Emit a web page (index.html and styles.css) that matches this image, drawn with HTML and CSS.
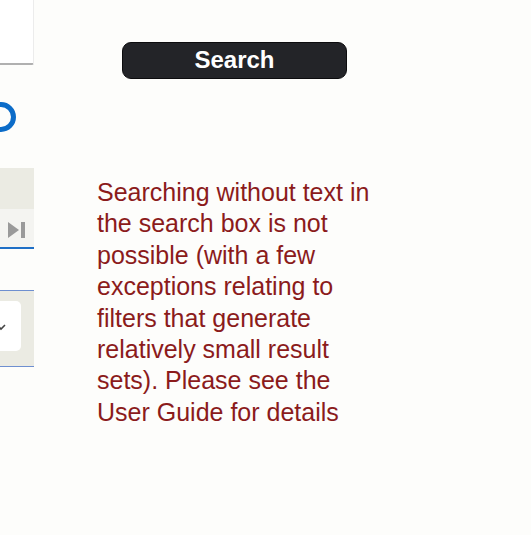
FILE: index.html
```html
<!DOCTYPE html>
<html lang="en">
<head>
<meta charset="utf-8">
<title>Search</title>
<link rel="stylesheet" href="styles.css">
</head>
<body>
<div class="page">
  <aside class="side">
    <div class="input-box"></div>
    <div class="radio-ring"></div>
    <div class="grey-box"></div>
    <div class="pager">
      <svg class="last-icon" width="20" height="20" viewBox="0 0 20 20" aria-hidden="true">
        <path d="M2 2 L13 10 L2 18 Z" fill="#9a9a9a"/>
        <rect x="15" y="2" width="4" height="16" fill="#9a9a9a"/>
      </svg>
    </div>
    <div class="select-wrap">
      <div class="select-inner">
        <svg class="chev" width="8" height="8" viewBox="0 0 8 8" aria-hidden="true">
          <path d="M-3 2 L1 6 L5 2" fill="none" stroke="#444" stroke-width="1.6"/>
        </svg>
      </div>
    </div>
  </aside>
  <main class="main">
    <button class="search-btn" type="button">Search</button>
    <p class="notice">Searching without text in the search box is not possible (with a few exceptions relating to filters that generate relatively small result sets). Please see the User Guide for details</p>
  </main>
</div>
</body>
</html>
```

FILE: styles.css
```css
html, body {
  margin: 0;
  padding: 0;
  background: #fdfdfb;
  font-family: "Liberation Sans", Arial, sans-serif;
}

.page {
  display: flex;
  width: 531px;
  height: 535px;
  overflow: hidden;
}

.side {
  width: 34px;
  flex: 0 0 34px;
  display: flex;
  flex-direction: column;
}

.input-box {
  height: 65px;
  box-sizing: border-box;
  background: #ffffff;
  border-bottom: 2px solid #b0b0b0;
  border-right: 1px solid #ececec;
  border-bottom-right-radius: 2px;
}

.radio-ring {
  margin-top: 37px;
  margin-left: -14px;
  width: 30px;
  height: 30px;
  box-sizing: border-box;
  border: 5px solid #0c6cc8;
  border-radius: 50%;
}

.grey-box {
  margin-top: 36px;
  height: 41px;
  background: #ebebe3;
}

.pager {
  height: 40px;
  box-sizing: border-box;
  background: #f4f4f1;
  border-bottom: 2.5px solid #1f6fc6;
  display: flex;
  align-items: center;
  padding-left: 6px;
}

.last-icon {
  display: block;
  margin-top: 4px;
}

.select-wrap {
  margin-top: 41px;
  height: 77px;
  box-sizing: border-box;
  border-top: 1.5px solid #6e8fd0;
  border-bottom: 1.5px solid #6e8fd0;
  background: #ebebe3;
  padding-top: 10px;
}

.select-inner {
  width: 21px;
  height: 50px;
  background: #ffffff;
  border-radius: 0 5px 5px 0;
  display: flex;
  align-items: center;
}

.chev {
  display: block;
  margin-top: 2px;
}

.main {
  flex: 1;
  padding-left: 63px;
  display: flex;
  flex-direction: column;
  align-items: flex-start;
}

.search-btn {
  margin: 42px 0 0 25px;
  width: 225px;
  height: 37px;
  background: #232428;
  border: 1px solid #0c0c0e;
  border-radius: 9px;
  color: #ffffff;
  font-family: "Liberation Sans", Arial, sans-serif;
  font-weight: bold;
  font-size: 24px;
  line-height: 1;
  padding: 0 0 1px 0;
  cursor: pointer;
}

.notice {
  margin: 98px 0 0 0;
  width: 280px;
  color: #8b1b1b;
  font-size: 25px;
  line-height: 31.4px;
}
```
